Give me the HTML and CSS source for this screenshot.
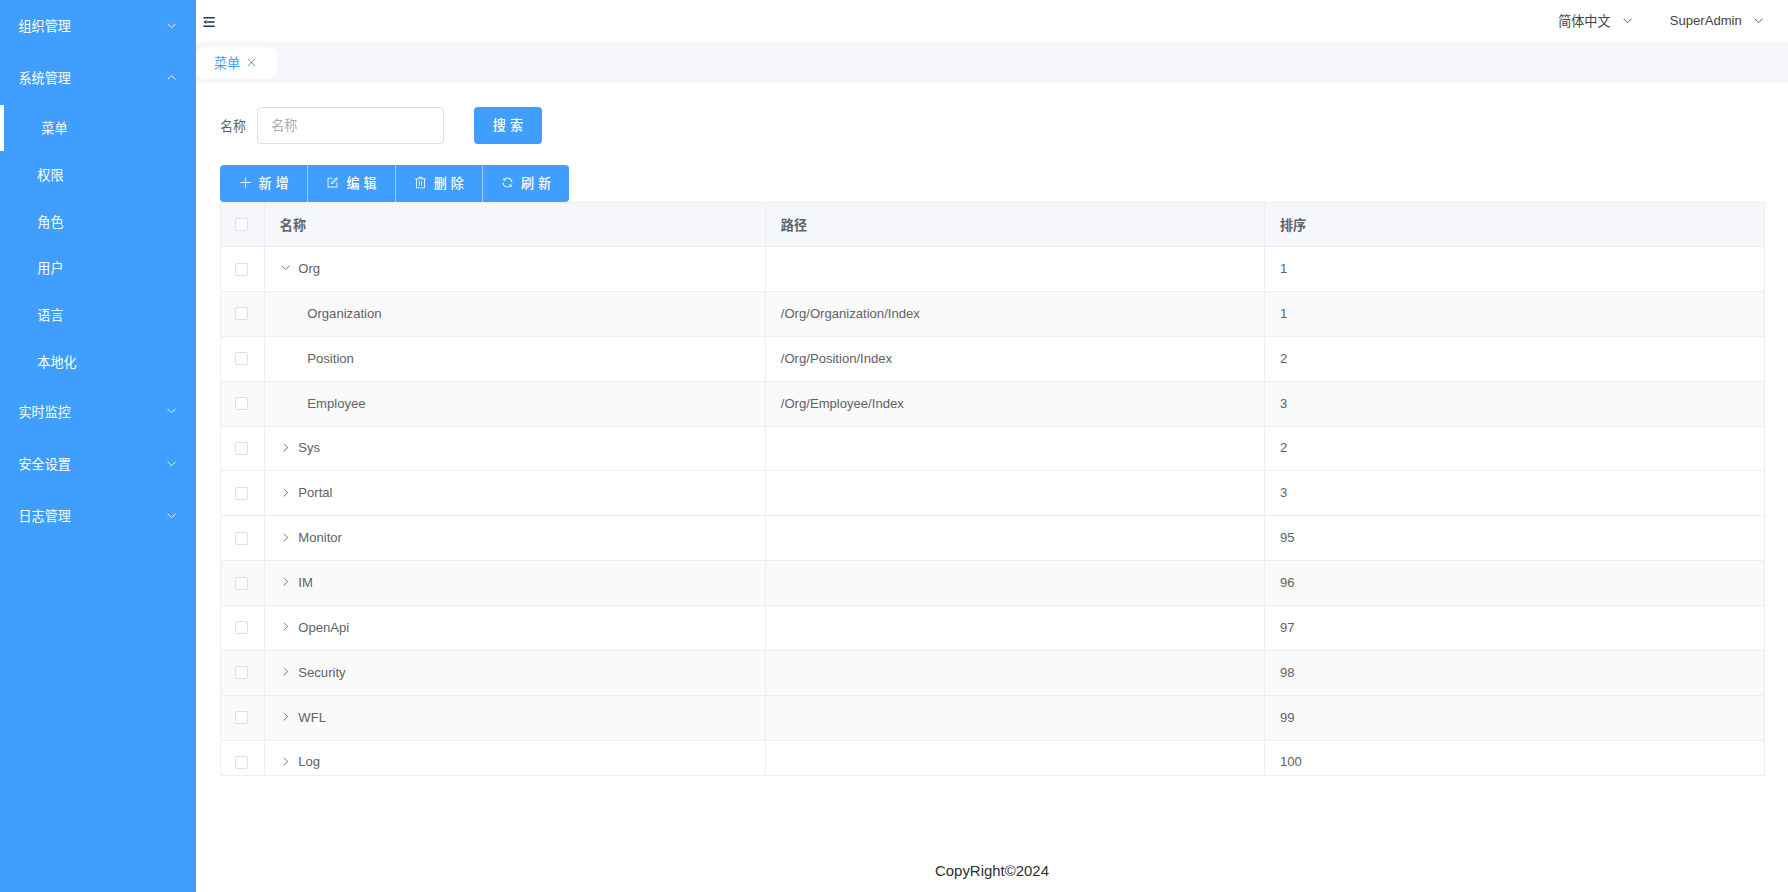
FILE: index.html
```
<!DOCTYPE html>
<html lang="zh-CN">
<head>
  <meta charset="UTF-8">
  <meta name="viewport" content="width=device-width, initial-scale=1.0">
  <title>菜单</title>
  <link rel="stylesheet" href="styles.css">
</head>
<body>

  <!-- ICONS -->
  <svg class="sprite" aria-hidden="true">
    <symbol id="arrow" viewBox="0 0 1024 1024"><path d="M831.872 340.864 512 652.672 192.128 340.864a30.592 30.592 0 0 0-42.752 0 29.12 29.12 0 0 0 0 41.6L489.664 714.24a32 32 0 0 0 44.672 0l340.288-331.712a29.12 29.12 0 0 0 0-41.728 30.592 30.592 0 0 0-42.752 0z"/></symbol>
    <symbol id="close" viewBox="0 0 1024 1024"><path d="M764.288 214.592 512 466.88 259.712 214.592a31.936 31.936 0 0 0-45.12 45.12L466.752 512 214.528 764.224a31.936 31.936 0 1 0 45.12 45.184L512 557.184l252.288 252.288a31.936 31.936 0 0 0 45.12-45.12L557.12 512.064l252.288-252.352a31.936 31.936 0 1 0-45.12-45.184z"/></symbol>
    <symbol id="plus" viewBox="0 0 1024 1024"><path d="M480 480V128a32 32 0 0 1 64 0v352h352a32 32 0 1 1 0 64H544v352a32 32 0 1 1-64 0V544H128a32 32 0 0 1 0-64z"/></symbol>
    <symbol id="edit" viewBox="0 0 1024 1024"><path d="M832 512a32 32 0 1 1 64 0v352a32 32 0 0 1-32 32H160a32 32 0 0 1-32-32V160a32 32 0 0 1 32-32h352a32 32 0 0 1 0 64H192v640h640z"/><path d="m469.952 554.24 52.8-7.552L847.104 222.4a32 32 0 1 0-45.248-45.248L477.44 501.44l-7.552 52.8zm422.4-422.4a96 96 0 0 1 0 135.808l-331.84 331.84a32 32 0 0 1-18.112 9.088L436.8 623.68a32 32 0 0 1-36.224-36.224l15.104-105.6a32 32 0 0 1 9.024-18.112l331.904-331.84a96 96 0 0 1 135.744 0z"/></symbol>
    <symbol id="delete" viewBox="0 0 1024 1024"><path d="M160 256H96a32 32 0 0 1 0-64h256V95.936a32 32 0 0 1 32-32h256a32 32 0 0 1 32 32V192h256a32 32 0 1 1 0 64h-64v672a32 32 0 0 1-32 32H192a32 32 0 0 1-32-32zm448-64v-64H416v64zM224 896h576V256H224zm192-128a32 32 0 0 1-32-32V416a32 32 0 0 1 64 0v320a32 32 0 0 1-32 32m192 0a32 32 0 0 1-32-32V416a32 32 0 0 1 64 0v320a32 32 0 0 1-32 32"/></symbol>
    <symbol id="refresh" viewBox="0 0 1024 1024"><path d="M771.776 794.88A384 384 0 0 1 128 512h64a320 320 0 0 0 555.712 216.448H654.72a32 32 0 1 1 0-64h149.056a32 32 0 0 1 32 32v148.928a32 32 0 1 1-64 0v-50.56zM276.288 295.616h92.992a32 32 0 0 1 0 64H220.16a32 32 0 0 1-32-32V178.56a32 32 0 0 1 64 0v50.56A384 384 0 0 1 896.128 512h-64a320 320 0 0 0-555.776-216.384z"/></symbol>
    <symbol id="fold" viewBox="0 0 12 10"><path d="M.4 0h11.2v1.5H.4zM4 4.2h7.6v1.5H4zM.4 8.4h11.2v1.5H.4zM.4 4.95 3.4 3v3.9z"/></symbol>
  </svg>

  <!-- SIDEBAR -->
  <div class="sidebar">
    <div class="menu-title">组织管理<svg class="icon"><use href="#arrow"/></svg></div>
    <div class="menu-title open">系统管理<svg class="icon"><use href="#arrow"/></svg></div>
    <div class="menu-item active">菜单</div>
    <div class="menu-item">权限</div>
    <div class="menu-item">角色</div>
    <div class="menu-item">用户</div>
    <div class="menu-item">语言</div>
    <div class="menu-item">本地化</div>
    <div class="menu-title">实时监控<svg class="icon"><use href="#arrow"/></svg></div>
    <div class="menu-title">安全设置<svg class="icon"><use href="#arrow"/></svg></div>
    <div class="menu-title">日志管理<svg class="icon"><use href="#arrow"/></svg></div>
  </div>

  <div class="container">
    <!-- HEADER -->
    <div class="header">
      <svg class="fold"><use href="#fold"/></svg>
      <div class="header-right">
        <div class="dropdown">简体中文<svg class="icon"><use href="#arrow"/></svg></div>
        <div class="dropdown">SuperAdmin<svg class="icon"><use href="#arrow"/></svg></div>
      </div>
    </div>

    <!-- TABS -->
    <div class="tabs">
      <div class="tab">菜单<svg class="icon"><use href="#close"/></svg></div>
    </div>

    <!-- CONTENT -->
    <div class="main">
      <div class="search-form">
        <label for="name">名称</label>
        <input type="text" id="name" placeholder="名称">
        <button class="btn"><span>搜索</span></button>
      </div>

      <div class="btn-group">
        <button class="btn"><svg class="icon"><use href="#plus"/></svg><span>新增</span></button>
        <button class="btn"><svg class="icon"><use href="#edit"/></svg><span>编辑</span></button>
        <button class="btn"><svg class="icon"><use href="#delete"/></svg><span>删除</span></button>
        <button class="btn"><svg class="icon"><use href="#refresh"/></svg><span>刷新</span></button>
      </div>

      <div class="table">
        <div class="row head">
          <div class="cell check"><i class="checkbox"></i></div>
          <div class="cell">名称</div>
          <div class="cell">路径</div>
          <div class="cell">排序</div>
        </div>
        <div class="row">
          <div class="cell check"><i class="checkbox"></i></div>
          <div class="cell"><svg class="icon expanded"><use href="#arrow"/></svg>Org</div>
          <div class="cell"></div>
          <div class="cell">1</div>
        </div>
        <div class="row striped">
          <div class="cell check"><i class="checkbox"></i></div>
          <div class="cell child">Organization</div>
          <div class="cell">/Org/Organization/Index</div>
          <div class="cell">1</div>
        </div>
        <div class="row">
          <div class="cell check"><i class="checkbox"></i></div>
          <div class="cell child">Position</div>
          <div class="cell">/Org/Position/Index</div>
          <div class="cell">2</div>
        </div>
        <div class="row striped">
          <div class="cell check"><i class="checkbox"></i></div>
          <div class="cell child">Employee</div>
          <div class="cell">/Org/Employee/Index</div>
          <div class="cell">3</div>
        </div>
        <div class="row">
          <div class="cell check"><i class="checkbox"></i></div>
          <div class="cell"><svg class="icon"><use href="#arrow"/></svg>Sys</div>
          <div class="cell"></div>
          <div class="cell">2</div>
        </div>
        <div class="row">
          <div class="cell check"><i class="checkbox"></i></div>
          <div class="cell"><svg class="icon"><use href="#arrow"/></svg>Portal</div>
          <div class="cell"></div>
          <div class="cell">3</div>
        </div>
        <div class="row">
          <div class="cell check"><i class="checkbox"></i></div>
          <div class="cell"><svg class="icon"><use href="#arrow"/></svg>Monitor</div>
          <div class="cell"></div>
          <div class="cell">95</div>
        </div>
        <div class="row striped">
          <div class="cell check"><i class="checkbox"></i></div>
          <div class="cell"><svg class="icon"><use href="#arrow"/></svg>IM</div>
          <div class="cell"></div>
          <div class="cell">96</div>
        </div>
        <div class="row">
          <div class="cell check"><i class="checkbox"></i></div>
          <div class="cell"><svg class="icon"><use href="#arrow"/></svg>OpenApi</div>
          <div class="cell"></div>
          <div class="cell">97</div>
        </div>
        <div class="row striped">
          <div class="cell check"><i class="checkbox"></i></div>
          <div class="cell"><svg class="icon"><use href="#arrow"/></svg>Security</div>
          <div class="cell"></div>
          <div class="cell">98</div>
        </div>
        <div class="row striped">
          <div class="cell check"><i class="checkbox"></i></div>
          <div class="cell"><svg class="icon"><use href="#arrow"/></svg>WFL</div>
          <div class="cell"></div>
          <div class="cell">99</div>
        </div>
        <div class="row">
          <div class="cell check"><i class="checkbox"></i></div>
          <div class="cell"><svg class="icon"><use href="#arrow"/></svg>Log</div>
          <div class="cell"></div>
          <div class="cell">100</div>
        </div>
      </div>
    </div>

    <!-- FOOTER -->
    <div class="footer">CopyRight©2024</div>
  </div>

</body>
</html>
```

FILE: styles.css
```
/* Reset & Base */
* { box-sizing: border-box; margin: 0; padding: 0; }
body {
  display: flex;
  height: 100vh;
  overflow: hidden;
  font-family: "Liberation Sans", "Noto Sans CJK SC", sans-serif;
  font-size: 13.1px;
  color: #606266;
  background: #fff;
}
.sprite { display: none; }
.icon {
  flex: none;
  width: 13px;
  height: 13px;
  fill: currentColor;
}

/* Sidebar */
.sidebar {
  flex: none;
  width: 196px;
  background: #409eff;
  color: #fff;
}
.menu-title {
  display: flex;
  align-items: center;
  justify-content: space-between;
  height: 52.3px;
  padding: 0 18.5px 1px;
}
.menu-title .icon {
  width: 11.2px;
  height: 11.2px;
}
.menu-title.open .icon { transform: rotate(180deg); }
.menu-item {
  display: flex;
  align-items: center;
  height: 46.8px;
  padding: 0 0 1px 37.3px;
}
.menu-item.active {
  border-left: 4px solid #fff;
}

/* Header */
.container {
  flex: 1;
  min-width: 0;
  display: flex;
  flex-direction: column;
}
.header {
  display: flex;
  align-items: center;
  justify-content: space-between;
  height: 42px;
  padding: 0 24px 0 6.5px;
}
.fold {
  width: 12px;
  height: 10px;
  margin-top: 1px;
  fill: #213547;
}
.header-right {
  display: flex;
  gap: 37px;
  padding-bottom: 1px;
}
.dropdown {
  display: flex;
  align-items: center;
  gap: 11px;
  color: #444;
}
.dropdown .icon {
  width: 11.2px;
  height: 11.2px;
}

/* Tabs */
.tabs {
  display: flex;
  align-items: center;
  height: 41px;
  background: #f5f7fa;
}
.tab {
  display: flex;
  align-items: center;
  gap: 5px;
  width: 81px;
  height: 32px;
  padding-left: 18px;
  border-radius: 9px;
  background: #fff;
  color: #409eff;
}
.tab .icon {
  width: 13px;
  height: 13px;
}

/* Search form */
.main {
  flex: 1;
  padding: 23.5px 23.3px 0 24px;
}
.search-form {
  display: flex;
  align-items: center;
  height: 37.3px;
  margin-bottom: 21px;
}
.search-form input {
  width: 187px;
  height: 37.3px;
  margin: 0 30px 0 11px;
  padding: 0 13px;
  border: 1px solid #dcdfe6;
  border-radius: 4px;
  font: inherit;
}
.search-form input::placeholder { color: #a8abb2; }

/* Buttons */
.btn {
  display: flex;
  align-items: center;
  justify-content: center;
  gap: 6px;
  width: 67.5px;
  height: 37.3px;
  padding-bottom: 1px;
  border: none;
  border-radius: 4px;
  background: #409eff;
  color: #fff;
  font: inherit;
  font-weight: 500;
}
.btn span {
  letter-spacing: 0.3em;
  margin-right: -0.3em;
}
.btn-group { display: flex; }
.btn-group .btn {
  gap: 7px;
  width: 87.3px;
  border-radius: 0;
}
.btn-group .btn + .btn { border-left: 1px solid #a0cfff; }
.btn-group .btn:first-child { border-radius: 4px 0 0 4px; }
.btn-group .btn:last-child { border-radius: 0 4px 4px 0; }

/* Table */
.table {
  height: 573.5px;
  overflow: hidden;
  border: 1px solid #ebeef5;
}
.row {
  display: grid;
  grid-template-columns: 44.3px 501px 499.2px 1fr;
  height: 44.87px;
  border-bottom: 1px solid #ebeef5;
}
.row.head {
  height: 44px;
  background: #f5f7fa;
  font-weight: bold;
}
.row.striped { background: #fafafa; }
.cell {
  display: flex;
  align-items: center;
  padding: 0 0 1px 14.5px;
  border-right: 1px solid #ebeef5;
}
.cell:last-child { border-right: none; }
.cell.child { padding-left: 42px; }
.cell .icon {
  width: 11.2px;
  height: 11.2px;
  margin: -1px 7.3px 0 0;
  transform: rotate(-90deg);
}
.cell .icon.expanded { transform: none; }
.check { padding: 0 0 0 14px; }
.checkbox {
  width: 13px;
  height: 13px;
  border: 1px solid #dcdfe6;
  border-radius: 2px;
  background: #fff;
}

/* Footer */
.footer {
  display: flex;
  align-items: center;
  justify-content: center;
  height: 43px;
  font-size: 14.95px;
  color: #303133;
}
```
